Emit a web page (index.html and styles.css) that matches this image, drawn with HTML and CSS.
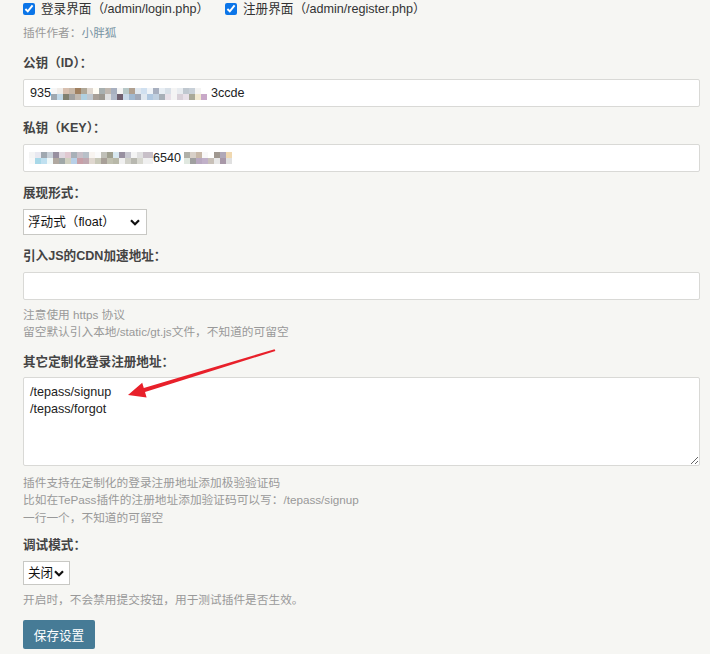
FILE: index.html
```html
<!DOCTYPE html>
<html lang="zh-CN">
<head>
<meta charset="utf-8">
<title>插件设置</title>
<link rel="stylesheet" href="styles.css">
</head>
<body>
<div class="page">
  <div class="checks">
    <label class="check first"><input type="checkbox" checked><span>登录界面（/admin/login.php）</span></label>
    <label class="check"><input type="checkbox" checked><span>注册界面（/admin/register.php）</span></label>
  </div>
  <p class="desc">插件作者：<a class="author" href="#">小胖狐</a></p>

  <div class="option">
    <div class="label">公钥（ID）：</div>
    <div class="field"><span>935</span><span class="mosaic m1"></span><span>3ccde</span></div>
  </div>

  <div class="option">
    <div class="label">私钥（KEY）：</div>
    <div class="field key"><span class="mosaic m2"></span><span class="digits">6540</span><span class="mosaic m3"></span></div>
  </div>

  <div class="option">
    <div class="label">展现形式：</div>
    <div class="select-wrap wide">
      <select class="select"><option>浮动式（float）</option></select>
      <svg class="chev" viewBox="0 0 10 7" width="10" height="7"><path d="M1 1.2 L5 5.2 L9 1.2" fill="none" stroke="#111" stroke-width="2.2"/></svg>
    </div>
  </div>

  <div class="option">
    <div class="label">引入JS的CDN加速地址：</div>
    <div class="field"></div>
    <p class="desc gap">注意使用 https 协议<br>留空默认引入本地/static/gt.js文件，不知道的可留空</p>
  </div>

  <div class="option">
    <div class="label">其它定制化登录注册地址：</div>
    <textarea class="area">/tepass/signup
/tepass/forgot</textarea>
    <p class="desc gap">插件支持在定制化的登录注册地址添加极验验证码<br>比如在TePass插件的注册地址添加验证码可以写：/tepass/signup<br>一行一个，不知道的可留空</p>
  </div>

  <div class="option tight">
    <div class="label">调试模式：</div>
    <div class="select-wrap narrow">
      <select class="select small"><option>关闭</option></select>
      <svg class="chev" viewBox="0 0 10 7" width="10" height="7"><path d="M1 1.2 L5 5.2 L9 1.2" fill="none" stroke="#111" stroke-width="2.2"/></svg>
    </div>
    <p class="desc gap">开启时，不会禁用提交按钮，用于测试插件是否生效。</p>
  </div>

  <button class="btn">保存设置</button>

  <svg class="arrow" viewBox="0 0 710 654" width="710" height="654">
    <polygon points="128,395 142.2,382.8 143.8,388.1 274.6,349.2 275.4,350.9 145,392 146.6,397.4" fill="#e8202a"/>
  </svg>
</div>
</body>
</html>
```

FILE: styles.css
```css
html, body {
  margin: 0;
  padding: 0;
  background: #f6f6f3;
}

body {
  font-family: "Liberation Sans", "Noto Sans CJK SC", sans-serif;
  font-size: 12.6px;
  color: #444;
  overflow: hidden;
}

.page {
  position: relative;
  width: 677px;
  height: 654px;
  padding: 0 10px 0 23px;
}

.checks {
  display: flex;
  align-items: center;
  height: 18px;
  line-height: 18px;
  color: #333;
}

.check {
  display: flex;
  align-items: center;
}

.check.first {
  width: 202px;
}

.check input {
  width: 12px;
  height: 12px;
  margin: 0 6px 0 0;
  accent-color: #0b75e8;
}

.desc {
  margin: 6px 0 0;
  font-size: 11.7px;
  line-height: 17.5px;
  color: #999;
}

.author {
  color: #7894a4;
  text-decoration: none;
}

.option {
  margin-top: 12px;
}

.option.tight {
  margin-top: 10px;
}

.label {
  font-weight: bold;
  line-height: 18px;
  margin-bottom: 7px;
  color: #444;
}

.field {
  box-sizing: border-box;
  height: 28px;
  width: 677px;
  background: #fff;
  border: 1px solid #d9d9d6;
  border-radius: 2px;
  padding: 0 6px;
  display: flex;
  align-items: center;
  color: #222;
  font-size: 12.6px;
}

.field.key {
  padding-left: 5px;
}

.mosaic {
  display: inline-block;
  height: 12px;
  background-repeat: no-repeat;
  background-size: 100% 6px, 100% 6px;
  background-position: 0 0, 0 6px;
}

.m1 {
  width: 160px;
  margin-top: 2px;
  background-image:
    linear-gradient(90deg, #f6f6f6 0 6px, #f0ece8 6px 12px, #d8c0b0 12px 18px, #c8b8a8 18px 24px, #a08060 24px 30px, #b0a898 30px 36px, #e0d8d0 36px 42px, #fffdf5 42px 48px, #a8b0b0 48px 54px, #c0b8b0 54px 60px, #a8b0c0 60px 66px, #f4f4f4 66px 72px, #b8c8c8 72px 78px, #b0a090 78px 84px, #e0e8f0 84px 90px, #d0e0f0 90px 96px, #f0f4f8 96px 102px, #a8b0c0 102px 108px, #e8eef4 108px 114px, #d8e0e8 114px 120px, #f4f4f4 120px 126px, #e8ecf0 126px 132px, #c0c8d0 132px 138px, #c8d0d8 138px 144px, #f4f4f4 144px 150px, #ffffff 150px 160px),
    linear-gradient(90deg, #a0a8b0 0 6px, #c0d8e8 6px 12px, #808070 12px 18px, #a0a0a0 18px 24px, #c0b8b0 24px 30px, #b0d0e0 30px 36px, #c0c8d0 36px 42px, #a8a098 42px 48px, #9c9890 48px 54px, #e0e0e0 54px 60px, #b0b8c8 60px 66px, #706070 66px 72px, #c8d8e8 72px 78px, #a0b8d0 78px 84px, #a0a8b8 84px 90px, #e0e8f0 90px 96px, #b0c8e0 96px 102px, #c0d0e0 102px 108px, #a8b0b8 108px 114px, #e8e0e8 114px 120px, #f4f4f4 120px 126px, #d8d0d8 126px 132px, #e8e0e8 132px 138px, #a8a898 138px 144px, #f0e8d0 144px 150px, #c8a8c8 150px 156px, #ffffff 156px 160px);
}

.m2 {
  width: 124px;
  background-image:
    linear-gradient(90deg, #f4f4f4 0 6px, #e8e8f0 6px 12px, #a0a8b0 12px 18px, #c8d0d8 18px 24px, #9890a0 24px 30px, #e0d8e0 30px 36px, #e0c8d0 36px 42px, #a8b0b8 42px 48px, #c8c0c8 48px 54px, #b8c0c8 54px 60px, #f8f4f0 60px 66px, #fafafa 66px 72px, #c0c0b8 72px 78px, #a0a090 78px 84px, #d8e8f0 84px 90px, #9890a0 90px 96px, #c8c8d0 96px 102px, #f4f4f4 102px 108px, #e0e0e0 108px 114px, #c8c0c8 114px 124px),
    linear-gradient(90deg, #f8f8f8 0 6px, #a8d8e8 6px 12px, #c0e0f0 12px 18px, #f0f8f8 18px 24px, #b0a8a0 24px 30px, #a0a8a8 30px 36px, #d0d0c0 36px 42px, #b8d0e8 42px 48px, #c8a0a8 48px 54px, #c0a8b0 54px 60px, #e0d8d0 60px 66px, #c8c8b8 66px 72px, #a8a098 72px 78px, #c0c0b0 78px 84px, #b8b8a8 84px 90px, #f0f0f0 90px 96px, #d0d0c8 96px 102px, #b8b8b0 102px 108px, #d8d8d0 108px 114px, #f0f0f0 114px 124px);
}

.digits {
  margin-left: 0;
  width: 31px;
  overflow: hidden;
  white-space: nowrap;
}

.m3 {
  width: 66px;
  background-image:
    linear-gradient(90deg, #b0b0a8 0 6px, #d8d0c8 6px 12px, #c8b8a8 12px 18px, #f8f8f8 18px 24px, #ffffff 24px 30px, #a09890 30px 36px, #b0a8b8 36px 42px, #f0d8b0 42px 48px, #ffffff 48px 66px),
    linear-gradient(90deg, #e0e8e0 0 6px, #a0a0a0 6px 12px, #b8a8c0 12px 18px, #c0b0c8 18px 24px, #c8c0b8 24px 30px, #e8e8e8 30px 36px, #a898a8 36px 42px, #e0e0e0 42px 48px, #ffffff 48px 66px);
}

.select-wrap {
  position: relative;
  display: inline-block;
}

.select {
  -webkit-appearance: none;
  appearance: none;
  box-sizing: border-box;
  width: 124px;
  height: 26px;
  border: 1px solid #c8c8c4;
  border-radius: 0;
  background: #fff;
  padding: 0 0 0 4px;
  font-family: "Liberation Sans", "Noto Sans CJK SC", sans-serif;
  font-size: 12.6px;
  color: #111;
  display: block;
}

.select.small {
  width: 47px;
  height: 24px;
}

.chev {
  position: absolute;
  top: 50%;
  margin-top: -3px;
  right: 7px;
  pointer-events: none;
}

.narrow .chev {
  right: 6px;
}

.area {
  display: block;
  box-sizing: border-box;
  width: 677px;
  height: 89px;
  border: 1px solid #d9d9d6;
  border-radius: 2px;
  background: #fff;
  padding: 6px 6px;
  margin-top: -1px;
  margin-bottom: 8px;
  resize: vertical;
  font-family: "Liberation Sans", "Noto Sans CJK SC", sans-serif;
  font-size: 12.6px;
  line-height: 17.5px;
  color: #222;
}

.gap {
  margin-top: 6px;
}

.btn {
  display: block;
  margin-top: 11px;
  height: 29px;
  width: 72px;
  padding: 0;
  border: none;
  border-radius: 2px;
  background: #467b96;
  color: #fff;
  font-family: "Liberation Sans", "Noto Sans CJK SC", sans-serif;
  font-size: 12.6px;
}

.arrow {
  position: absolute;
  left: 0;
  top: 0;
  pointer-events: none;
}
```
